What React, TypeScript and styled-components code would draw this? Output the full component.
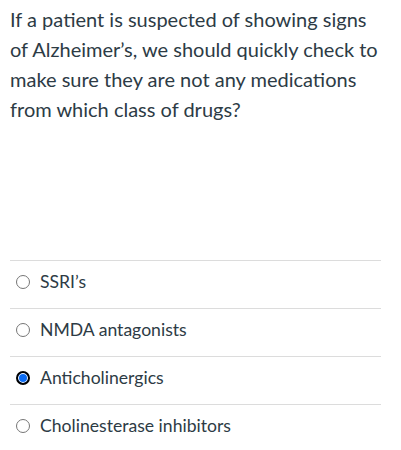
import React, { useState } from 'react';
import styled, { createGlobalStyle } from 'styled-components';

const GlobalStyle = createGlobalStyle`
  body {
    margin: 0;
    background: #fff;
    font-family: Lato, "Open Sans", sans-serif;
    color: #2d3b45;
  }
`;

const Page = styled.section`
  padding: 4px 20px 0 10px;
`;

const Question = styled.p`
  margin: 0;
  font-size: 20px;
  line-height: 30px;
  height: 256px;
`;

const Answers = styled.ul`
  list-style: none;
  margin: 0;
  padding: 0;
`;

const Answer = styled.li`
  border-top: 1px solid #dcdcdc;
  height: 47px;
`;

const Label = styled.label`
  display: flex;
  align-items: center;
  gap: 10px;
  height: 100%;
  padding: 0 0 6px 6px;
  box-sizing: border-box;
  font-size: 17.6px;
  cursor: pointer;
`;

const Radio = styled.input.attrs({ type: 'radio' })`
  appearance: none;
  margin: 0;
  width: 14px;
  height: 14px;
  border-radius: 50%;
  border: 1px solid #767676;
  background: #fff;

  &:checked {
    border: 2px solid #000;
    background: #0b6cf5;
    box-shadow: inset 0 0 0 1px #fff;
  }
`;

const options = ['SSRI’s', 'NMDA antagonists', 'Anticholinergics', 'Cholinesterase inhibitors'];

export default function App() {
  const [picked, setPicked] = useState(2);
  return (
    <Page>
      <GlobalStyle />
      <Question>
        If a patient is suspected of showing signs of Alzheimer’s, we should quickly check to make
        sure they are not any medications from which class of drugs?
      </Question>
      <Answers>
        {options.map((o, i) => (
          <Answer key={o}>
            <Label>
              <Radio name="q" checked={picked === i} onChange={() => setPicked(i)} />
              {o}
            </Label>
          </Answer>
        ))}
      </Answers>
    </Page>
  );
}
